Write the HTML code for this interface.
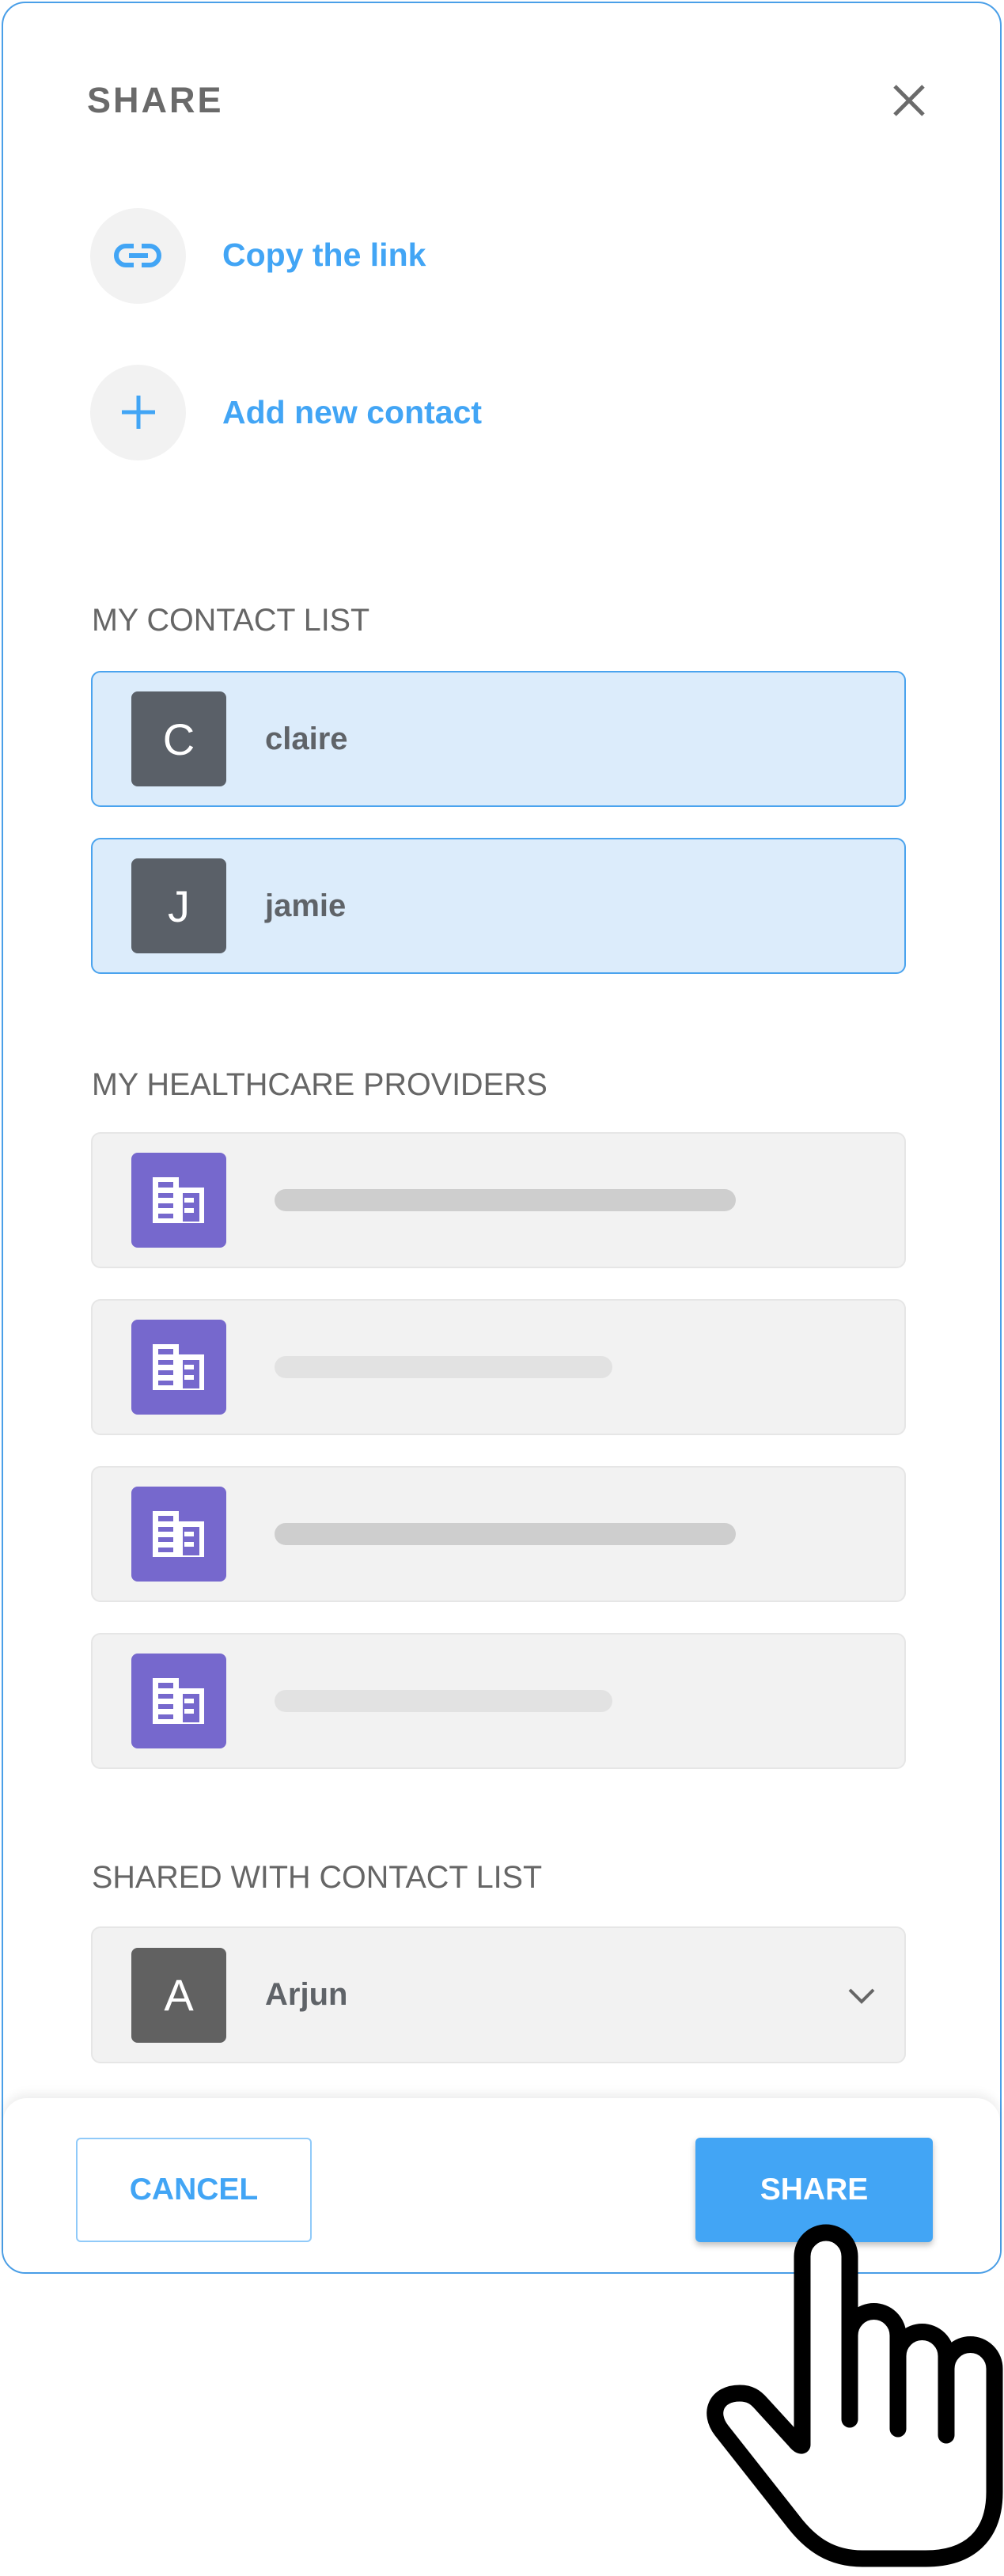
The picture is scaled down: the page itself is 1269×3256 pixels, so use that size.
<!DOCTYPE html>
<html><head><meta charset="utf-8">
<style>
*{margin:0;padding:0;box-sizing:border-box}
body{width:1269px;height:3256px;background:#fff;position:relative;overflow:hidden;font-family:"Liberation Sans",sans-serif}
.frame{position:absolute;left:2px;top:2px;width:1264px;height:2872px;border:2px solid #4a9fe8;border-radius:30px;overflow:hidden;background:#fff}
.abs{position:absolute}
.title{left:110px;top:104px;font-size:45px;font-weight:bold;letter-spacing:3px;color:#6a6a6a;line-height:45px}
.circ{width:121px;height:121px;border-radius:50%;background:#f2f2f2;left:114px}
.act{left:281px;font-size:41px;font-weight:bold;color:#42a5f5;line-height:41px}
.lbl{left:116px;font-size:39.5px;color:#666;line-height:40px}
.card{left:115px;width:1030px;border-radius:12px;display:flex;align-items:center}
.blue{background:#dcecfb;border:2px solid #4aa3ee}
.grey{background:#f2f2f2;border:2px solid #e6e6e6}
.av{position:absolute;left:49px;width:120px;height:120px;border-radius:8px;color:#fff;font-size:56px;display:flex;align-items:center;justify-content:center}
.nm{position:absolute;left:218px;font-size:40px;font-weight:bold;color:#5f6368}
.bar{position:absolute;left:230px;height:28px;border-radius:14px}
.btn{top:2702px;height:132px;width:298px;border-radius:6px;display:flex;align-items:center;justify-content:center;font-size:39px;font-weight:bold}
</style></head><body>
<div class="frame">
</div>
<div class="abs title">SHARE</div>
<svg class="abs" style="left:1128px;top:106px" width="42" height="42" viewBox="0 0 42 42"><path d="M3 3L39 39M39 3L3 39" stroke="#6b6b6b" stroke-width="5"/></svg>

<div class="abs circ" style="top:263px"></div>
<svg class="abs" style="left:144px;top:308px" width="60" height="30" viewBox="0 0 60 30"><path d="M25 3H15A12 12 0 0 0 15 27H25M35 3H45A12 12 0 0 1 45 27H35" fill="none" stroke="#42a5f5" stroke-width="6"/><rect x="19" y="12" width="24" height="6" fill="#42a5f5"/></svg>
<div class="abs act" style="top:302px">Copy the link</div>

<div class="abs circ" style="top:461px"></div>
<svg class="abs" style="left:152px;top:498px" width="46" height="46" viewBox="0 0 46 46"><path d="M23 2V44M2 23H44" stroke="#42a5f5" stroke-width="5"/></svg>
<div class="abs act" style="top:501px">Add new contact</div>

<div class="abs lbl" style="top:764px">MY CONTACT LIST</div>
<div class="abs card blue" style="top:848px;height:172px"><div class="av" style="background:#5a6068">C</div><div class="nm">claire</div></div>
<div class="abs card blue" style="top:1059px;height:172px"><div class="av" style="background:#5a6068">J</div><div class="nm">jamie</div></div>

<div class="abs lbl" style="top:1351px">MY HEALTHCARE PROVIDERS</div>
<svg width="0" height="0" style="position:absolute"><defs><g id="bld"><rect x="27" y="31" width="33" height="58" fill="#fff"/><rect x="60" y="44" width="32" height="45" fill="#fff"/><g fill="#7668cd"><rect x="34" y="37" width="19" height="7"/><rect x="34" y="51" width="19" height="6"/><rect x="34" y="64" width="19" height="6"/><rect x="34" y="77" width="19" height="6"/><rect x="65" y="51" width="21" height="36"/></g><rect x="67" y="57" width="12" height="6" fill="#fff"/><rect x="67" y="70" width="12" height="6" fill="#fff"/></g></defs></svg>
<div class="abs card grey" style="top:1431px;height:172px"><div class="av" style="background:#7668cd"><svg width="120" height="120"><use href="#bld"/></svg></div><div class="bar" style="width:583px;background:#cecece"></div></div>
<div class="abs card grey" style="top:1642px;height:172px"><div class="av" style="background:#7668cd"><svg width="120" height="120"><use href="#bld"/></svg></div><div class="bar" style="width:427px;background:#e2e2e2"></div></div>
<div class="abs card grey" style="top:1853px;height:172px"><div class="av" style="background:#7668cd"><svg width="120" height="120"><use href="#bld"/></svg></div><div class="bar" style="width:583px;background:#cecece"></div></div>
<div class="abs card grey" style="top:2064px;height:172px"><div class="av" style="background:#7668cd"><svg width="120" height="120"><use href="#bld"/></svg></div><div class="bar" style="width:427px;background:#e2e2e2"></div></div>

<div class="abs lbl" style="top:2353px">SHARED WITH CONTACT LIST</div>
<div class="abs card grey" style="top:2435px;height:173px"><div class="av" style="background:#616161">A</div><div class="nm">Arjun</div>
<svg class="abs" style="left:954px;top:75px" width="36" height="22" viewBox="0 0 36 22"><path d="M3 3L18 18L33 3" fill="none" stroke="#666" stroke-width="4"/></svg></div>

<div class="abs" style="left:4px;top:2652px;width:1260px;height:220px;background:#fff;border-radius:30px 30px 28px 28px;box-shadow:0 -6px 12px rgba(0,0,0,0.07)"></div>
<div class="abs btn" style="left:96px;border:2px solid #90caf9;color:#42a5f5;background:#fff">CANCEL</div>
<div class="abs btn" style="left:879px;width:300px;background:#42a5f5;color:#fff;box-shadow:0 4px 8px rgba(0,0,0,0.25)">SHARE</div>

<svg class="abs" style="left:0;top:0" width="1269" height="3256" viewBox="0 0 1269 3256">
<path d="M1014 3090L1014 2852A30 30 0 0 1 1074 2852L1074 2952A30.5 30.5 0 0 1 1135 2952L1135 2978A30.5 30.5 0 0 1 1196 2978L1196 2994A30.5 30.5 0 0 1 1257 2994L1257 3150C1257 3205 1225 3234 1170 3234L1090 3234C1050 3234 1025 3215 1005 3190L912 3072C895 3050 905 3025 935 3025C948 3025 955 3030 962 3038L1004 3084C1010 3092 1014 3092 1014 3090Z" fill="#fff" stroke="#000" stroke-width="21" stroke-linejoin="round"/>
<path d="M1074 2952L1074 3058M1135 2978L1135 3070M1196 2994L1196 3078" stroke="#000" stroke-width="21" stroke-linecap="round"/>
</svg>
</body></html>
